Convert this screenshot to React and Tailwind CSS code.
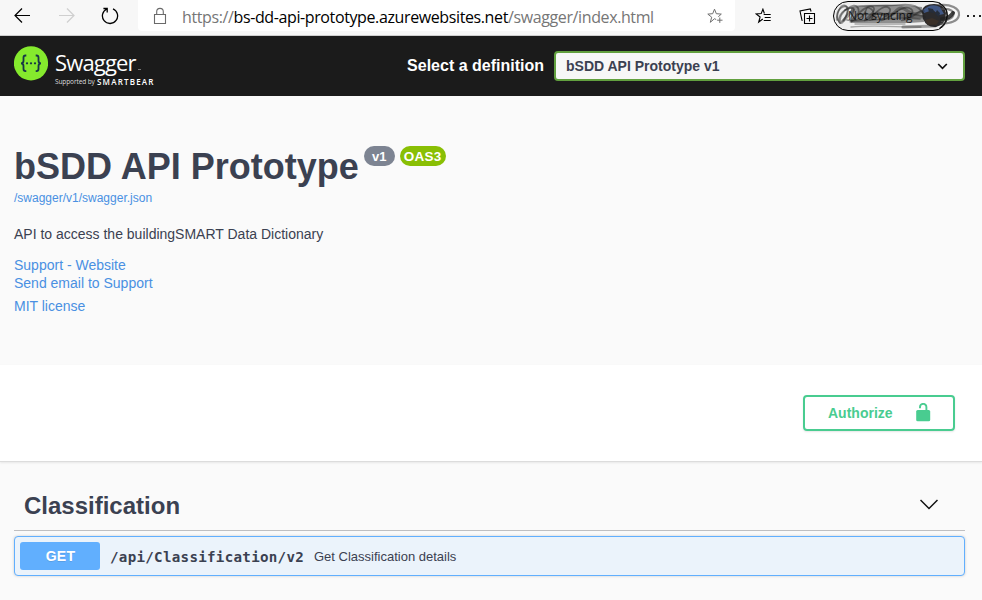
const stroke = { fill: 'none', stroke: 'currentColor' };

function BackIcon() {
  return (
    <svg className="h-4 w-[17px]" viewBox="0 0 17 16" {...stroke} strokeWidth="1.2">
      <path d="M16 7.5H1M8 .5l-7 7 7 7" />
    </svg>
  );
}

function ForwardIcon() {
  return (
    <svg className="h-4 w-[17px] text-[#cfcfcf]" viewBox="0 0 17 16" {...stroke} strokeWidth="1.2">
      <path d="M1 7.5h15M9 .5l7 7-7 7" />
    </svg>
  );
}

function ReloadIcon() {
  return (
    <svg className="h-[18px] w-[18px]" viewBox="0 0 18 18" {...stroke} strokeWidth="1.3">
      <path d="M12 1.9A7.6 7.6 0 1 1 5.8 2M2.4 1.5h3.8v4" />
    </svg>
  );
}

function LockIcon() {
  return (
    <svg className="h-[18px] w-[14px] text-[#6a6a6a]" viewBox="0 0 14 18" {...stroke} strokeWidth="1.1">
      <path d="M1.5 7.5h11v9h-11zM3.7 7.5V4.7a3.3 3.3 0 0 1 6.6 0v2.8" />
    </svg>
  );
}

function AddFavoriteIcon() {
  return (
    <svg className="h-4 w-[17px] text-[#707070]" viewBox="0 0 17 16" {...stroke} strokeWidth="1">
      <path d="M9.2 11.6 7.5 10.7 3.3 14.3 4.7 9.2.8 6.1 5.7 5.7 7.5 1.2 9.3 5.7 14.3 6.1 11.3 8.7M12.8 9.5v5.4M10.1 12.2h5.4" />
    </svg>
  );
}

function FavoritesIcon() {
  return (
    <svg className="h-4 w-4" viewBox="0 0 16 16" {...stroke} strokeWidth="1.1">
      <path d="M9.4 5.5 7.9 1.2 6.2 5.6 1.2 6 5.1 9 3.7 14 7.8 11M8.7 6.5h7M9.7 9.5h6M8.7 12.5h7" />
    </svg>
  );
}

function CollectionsIcon() {
  return (
    <svg className="h-[17px] w-[17px]" viewBox="0 0 17 17" {...stroke} strokeWidth="1.1">
      <path d="M5.5 5.5h10v10h-10zM10.5 7.5v6M7.5 10.5h6M3.6 12.6 3 12.4 1 3 11.3.9l.8 2.6" />
    </svg>
  );
}

function ProfilePill() {
  return (
    <div className="relative h-[31px] w-[130px]">
      <div className="absolute left-0 top-[1px] h-[30px] w-[115px] rounded-full border border-black bg-[#eeeeee]" />
      <svg className="absolute left-0 top-0 h-[31px] w-[130px]" viewBox="0 0 130 31" fill="none" strokeLinecap="round">
        <path d="M18 8q30-6 71-1l2 15-16 1-57 0z" fill="#666" fillOpacity=".7" />
        <path d="M89 11q1-7 12-7t12 9q0 12-10 14-9 1-13-8z" fill="#2c2b2d" />
        <path d="M89 11q9-9 18-4l4 7-5 1-6-5-9 3z" fill="#46639a" fillOpacity=".8" />
        <path d="M95 8l5 1 1 4-5-1zM104 10l3 3-1 4-4-3z" fill="#252d3b" />
        <path d="M92 20l7-2 7 3-3 4-8 0z" fill="#3a3029" />
        <g stroke="#202020" strokeOpacity=".45" strokeWidth="1.7">
          <path d="M7 23C-1 14 9 4 14 7S7 27 7 20 21 0 25 8 14 25 18 21 34 3 40 7 26 23 33 20 50 3 56 8 42 22 50 20 70 3 78 9 61 22 71 20 88 7 90 13" />
          <path d="M4 20C4 10 9 3 13 6S11 25 7 23 8 9 18 8 9 25 23 20 30 4 38 9 32 24 44 17" />
          <path d="M12 10c12-7 35-3 53-5s21 3 25 8M14 20c19 4 38-5 73-1M24 14c21 2 40-4 66 2" />
        </g>
        <path d="M18 27c22-2 45 0 70 0M22 24h50" stroke="#777" strokeOpacity=".6" strokeWidth="1.3" />
        <g stroke="#222" strokeOpacity=".4" strokeWidth="3.2">
          <path d="M37 19c11-15 14 5 25-7s12 9 28-1M65 16l26 1M70 27l32-1M20 10l-9 10" />
        </g>
        <path d="M107 5c10-1 20 3 19 10s-10 8-18 9M109 9c9-1 13 3 11 7s-7 4-11 5" stroke="#555" strokeOpacity=".65" strokeWidth="2.2" />
        <path d="M109 19q7 0 11-6" stroke="#222" strokeOpacity=".85" strokeWidth="4" />
        <path d="M106 3q9 5 8 13t-7 12" stroke="#111" strokeWidth="1.2" />
      </svg>
      <span className="absolute left-[15px] top-[7px] whitespace-nowrap font-['Open_Sans','Noto_Sans',sans-serif] text-[12px] leading-[18px] tracking-[-0.1px] text-black/80">
        Not syncing
      </span>
    </div>
  );
}

function BrowserBar() {
  return (
    <div className="flex h-9 items-start border-b border-[#cecece] bg-[#f7f7f7]">
      <div className="flex h-[31px] w-[138px] shrink-0 items-center pl-[14px]">
        <BackIcon />
        <div className="ml-[27px] flex"><ForwardIcon /></div>
        <div className="ml-[26px] flex"><ReloadIcon /></div>
      </div>
      <div className="flex h-[31px] w-[597px] shrink-0 items-center rounded-b bg-white pl-[15px] pr-[11px]">
        <LockIcon />
        <div className="ml-[15px] mt-[2px] whitespace-nowrap font-['Open_Sans','Noto_Sans',sans-serif] text-[16px] leading-[22px] tracking-[-0.385px] text-[#767676]">
          https://<span className="text-black">bs-dd-api-prototype.azurewebsites.net</span>/swagger/index.html
        </div>
        <div className="ml-auto mt-px"><AddFavoriteIcon /></div>
      </div>
      <div className="flex h-[31px] shrink-0 items-center pl-5">
        <div className="mt-px"><FavoritesIcon /></div>
        <div className="ml-[28px] mt-[2px]"><CollectionsIcon /></div>
        <div className="ml-[17px]"><ProfilePill /></div>
        <div className="ml-[4px] flex gap-1">
          <i className="h-0.5 w-0.5 bg-[#222]" />
          <i className="h-0.5 w-0.5 bg-[#222]" />
          <i className="h-0.5 w-0.5 bg-[#222]" />
        </div>
      </div>
    </div>
  );
}

function SwaggerLogo() {
  return (
    <div className="flex pt-[10px]">
      <svg className="h-[35px] w-[34px]" viewBox="0 0 34 35">
        <circle cx="17" cy="17.3" r="17.1" fill="#85ea2d" />
        <g fill="none" stroke="#173647" strokeWidth="1.8">
          <path d="M12.3 9.5h-.8q-2 0-2 2v3.2q0 2.3-2.4 2.6 2.4.3 2.4 2.6v3.2q0 2 2 2h.8M21.7 9.5h.8q2 0 2 2v3.2q0 2.3 2.4 2.6-2.4.3-2.4 2.6v3.2q0 2-2 2h-.8" />
        </g>
        <g fill="#173647">
          <circle cx="13" cy="17.3" r="1.15" />
          <circle cx="17" cy="17.3" r="1.15" />
          <circle cx="21" cy="17.3" r="1.15" />
        </g>
      </svg>
      <div className="ml-[7px] font-['Open_Sans','Noto_Sans',sans-serif] text-white">
        <div className="flex h-[30px] items-end">
          <span className="text-[22px] leading-[28px] tracking-[-0.85px]">Swagger</span>
          <span className="mb-[6px] ml-[2px] h-px w-[3px] bg-[#777]" />
        </div>
        <div className="flex h-[11px] items-center whitespace-nowrap leading-[11px]">
          <span className="w-[42px] text-[6.5px] tracking-[-0.1px] text-[#ddd]">Supported by</span>
          <span className="text-[8px] font-semibold tracking-[1.2px]">SMARTBEAR</span>
        </div>
      </div>
    </div>
  );
}

function TopBar() {
  return (
    <header className="flex h-[60px] bg-[#1b1b1b] pl-[14px] pr-[17px]">
      <SwaggerLogo />
      <div className="ml-auto flex items-center">
        <span className="mr-[10px] text-[16px] font-bold leading-5 text-white">Select a definition</span>
        <div className="flex h-[30px] w-[411px] items-center justify-between rounded border-2 border-[#62a03f] bg-[#f7f7f7] pl-[10px] pr-[15px]">
          <span className="text-[14px] font-bold leading-[18px] text-[#3b4151]">bSDD API Prototype v1</span>
          <svg className="h-[7px] w-[11px]" viewBox="0 0 11 7" fill="none" stroke="#111" strokeWidth="1.7">
            <path d="m1.2 1 4.3 4.3L9.8 1" />
          </svg>
        </div>
      </div>
    </header>
  );
}

function Info() {
  return (
    <section className="h-[269px] pl-[14px] pt-[50px] text-[14px] leading-[18px] text-[#4990e2]">
      <div className="flex h-11 items-start">
        <h1 className="text-[36px] font-bold leading-[42px] text-[#3b4151]">bSDD API Prototype</h1>
        <span className="ml-[5px] flex h-5 w-[31px] items-center justify-center rounded-full bg-[#7d8492] pt-px text-[13px] font-bold text-white">v1</span>
        <span className="ml-[5px] flex h-5 w-[46px] items-center justify-center rounded-full bg-[#89bf04] pt-px text-[13.5px] font-bold tracking-[0.3px] text-white">OAS3</span>
      </div>
      <div className="text-[12px] leading-4">/swagger/v1/swagger.json</div>
      <p className="mt-[19px] text-[#3b4151]">API to access the buildingSMART Data Dictionary</p>
      <div className="mt-[13px]">Support - Website</div>
      <div>Send email to Support</div>
      <div className="mt-[5px]">MIT license</div>
    </section>
  );
}

function Authorize() {
  return (
    <section className="flex h-[97px] items-start justify-end border-b border-[#dcdcdc] bg-white pr-[27px] pt-[30px] shadow-[0_1px_2px_rgba(0,0,0,0.08)]">
      <button className="flex h-9 w-[152px] items-center rounded border-2 border-[#49cc90] pl-[23px] text-[14px] font-bold text-[#49cc90] shadow-[0_1px_2px_rgba(0,0,0,0.1)]">
        <span>Authorize</span>
        <svg className="mb-px ml-[23px] h-[19px] w-[15px]" viewBox="0 0 15 19">
          <rect x=".2" y="7" width="14" height="11.2" rx="1.5" fill="#49cc90" />
          <path d="M4 5.2V4a3.2 3.2 0 0 1 6.4 0v4" fill="none" stroke="#49cc90" strokeWidth="1.9" />
        </svg>
      </button>
    </section>
  );
}

function Operations() {
  return (
    <section className="pl-[14px] pr-[17px] pt-[19px] text-[#3b4151]">
      <div className="flex h-[50px] items-center justify-between border-b border-[#bfbfc1] pl-[10px] pr-[27px]">
        <h2 className="text-[24px] font-bold leading-7">Classification</h2>
        <svg className="mb-[2px] h-[11px] w-[18px]" viewBox="0 0 18 11" fill="none" stroke="#111" strokeWidth="1.5">
          <path d="m.5 1 8.5 8.5L17.5 1" />
        </svg>
      </div>
      <div className="mt-[5px] flex h-10 items-center rounded border border-[#61affe] bg-[#ebf3fb] pl-[5px] shadow-[0_0_3px_rgba(0,0,0,0.19)]">
        <span className="flex h-7 w-20 items-center justify-center rounded-[3px] bg-[#61affe] pl-px text-[14px] font-bold tracking-[0.3px] text-white [text-shadow:0_1px_0_rgba(0,0,0,0.1)]">GET</span>
        <span className="ml-[10px] w-[194px] whitespace-nowrap pt-[2px] font-['DejaVu_Sans_Mono',monospace] text-[14.2px] font-bold leading-5 tracking-[0.28px]">/api/Classification/v2</span>
        <span className="ml-[10px] pt-[2px] text-[13px] leading-5">Get Classification details</span>
      </div>
    </section>
  );
}

export default function App() {
  return (
    <div className="h-[600px] w-[982px] overflow-hidden bg-[#fafafa] font-['Liberation_Sans',Arial,sans-serif]">
      <BrowserBar />
      <TopBar />
      <Info />
      <Authorize />
      <Operations />
    </div>
  );
}
